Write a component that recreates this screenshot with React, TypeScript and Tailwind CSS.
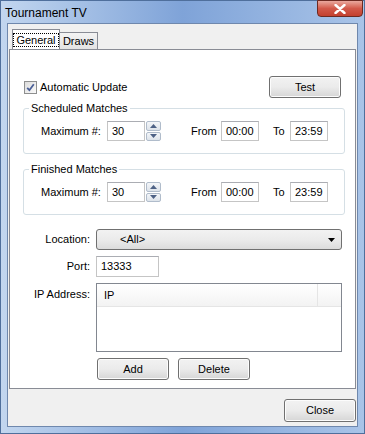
import React from "react";

const font = { fontFamily: '"Liberation Sans", Arial, sans-serif' };

function Btn({ label, className = "" }: { label: string; className?: string }) {
  return (
    <div
      className={
        "flex items-center justify-center w-[72px] h-[22px] rounded-[3px] border border-[#707070] bg-gradient-to-b from-[#f2f2f2] via-[#ebebeb] to-[#d6d6d6] text-[11px] text-black shadow-[inset_0_0_0_1px_#fcfcfc] " +
        className
      }
    >
      {label}
    </div>
  );
}

function TextBox({ value, className = "" }: { value: string; className?: string }) {
  return (
    <div
      className={
        "h-[20px] border border-[#c5c5c5] border-t-[#abadb3] bg-white px-[4px] flex items-center text-[11px] " +
        className
      }
    >
      {value}
    </div>
  );
}

function Spinner() {
  return (
    <div className="flex flex-col ml-[1px] w-[15px] h-[20px] gap-[1px]">
      <div className="flex-1 flex items-center justify-center border border-[#b0bccb] rounded-[2px] bg-gradient-to-b from-[#f4f6f9] to-[#dde3ea]">
        <svg width="7" height="4" viewBox="0 0 7 4">
          <path d="M0 4 L3.5 0 L7 4 Z" fill="#4d6185" />
        </svg>
      </div>
      <div className="flex-1 flex items-center justify-center border border-[#b0bccb] rounded-[2px] bg-gradient-to-b from-[#f4f6f9] to-[#dde3ea]">
        <svg width="7" height="4" viewBox="0 0 7 4">
          <path d="M0 0 L7 0 L3.5 4 Z" fill="#4d6185" />
        </svg>
      </div>
    </div>
  );
}

function Group({ title }: { title: string }) {
  return (
    <div className="relative h-[46px] border border-[#d5dfe5] rounded-[3px] pt-[12px] pl-[17px]">
      <span className="absolute -top-[8px] left-[5px] bg-white px-[2px] text-[11px] leading-[14px]">{title}</span>
      <div className="flex items-center text-[11px]">
        <span className="w-[66px]">Maximum #:</span>
        <TextBox value="30" className="w-[38px]" />
        <Spinner />
        <span className="ml-[30px] w-[30px]">From</span>
        <TextBox value="00:00" className="w-[38px]" />
        <span className="ml-[14px] w-[17px]">To</span>
        <TextBox value="23:59" className="w-[38px]" />
      </div>
    </div>
  );
}

export default function App() {
  return (
    <div
      style={font}
      className="w-[365px] h-[434px] flex flex-col bg-gradient-to-r from-[#c2d6ef] via-[#7fa3d8] to-[#a9c4e8] border border-[#4f6f9c] px-[6px] pb-[6px] text-black"
    >
      {/* title bar */}
      <div className="h-[22px] flex items-start justify-between">
        <span className="mt-[3px] ml-[-2px] text-[12px]">Tournament TV</span>
        <div className="w-[46px] h-[17px] mt-[-1px] mr-[-5px] rounded-b-[4px] border border-[#6d2a22] bg-gradient-to-b from-[#e9a89e] via-[#d2594a] to-[#c3402f] flex items-center justify-center">
          <svg width="12" height="10" viewBox="0 0 12 10">
            <path d="M1.5 1 L10.5 9 M10.5 1 L1.5 9" stroke="#fff" strokeWidth="2.4" strokeLinecap="round" />
          </svg>
        </div>
      </div>

      {/* client area */}
      <div className="flex-1 flex flex-col bg-[#f0f0f0] border border-[#6f88ad] pl-[1px]">
        {/* tabs */}
        <div className="flex items-end mt-[6px] ml-[3px] h-[19px] text-[11px] relative z-10">
          <div className="h-[20px] w-[48px] bg-white border border-[#898c95] border-b-0 flex items-center justify-center">
            <span className="border border-dotted border-black px-[2px] leading-[12px]">General</span>
          </div>
          <div className="h-[17px] w-[38px] bg-gradient-to-b from-[#f3f3f3] to-[#e3e3e3] border border-[#898c95] border-l-0 border-b-0 flex items-center justify-center">
            Draws
          </div>
        </div>

        {/* panel */}
        <div className="w-[347px] h-[340px] bg-white border border-[#898c95] pt-[26px] pl-[13px] pr-[10px] text-[11px]">
          <div className="h-[22px] flex items-center justify-between">
            <div className="flex items-center ml-[1px]">
              <div className="w-[13px] h-[13px] border border-[#8e8f8f] bg-gradient-to-br from-[#dcdcdc] to-[#fafafa] flex items-center justify-center">
                <svg width="9" height="9" viewBox="0 0 9 9">
                  <path d="M1.2 4.8 L3.4 7.2 L7.8 1.2" stroke="#4a5f97" strokeWidth="1.8" fill="none" />
                </svg>
              </div>
              <span className="ml-[3px]">Automatic Update</span>
            </div>
            <Btn label="Test" className="mr-[4px]" />
          </div>

          <div className="mt-[10px]">
            <Group title="Scheduled Matches" />
          </div>
          <div className="mt-[15px]">
            <Group title="Finished Matches" />
          </div>

          <div className="mt-[14px] flex items-center">
            <span className="w-[67px] text-right">Location:</span>
            <div className="ml-[6px] w-[246px] h-[21px] rounded-[3px] border border-[#707070] bg-gradient-to-b from-[#f2f2f2] via-[#ebebeb] to-[#dcdcdc] flex items-center justify-between pl-[23px] pr-[6px]">
              <span>&lt;All&gt;</span>
              <svg width="7" height="4" viewBox="0 0 7 4">
                <path d="M0 0 L7 0 L3.5 4 Z" fill="#000" />
              </svg>
            </div>
          </div>

          <div className="mt-[6px] flex items-center">
            <span className="w-[67px] text-right">Port:</span>
            <TextBox value="13333" className="ml-[6px] w-[63px] h-[21px]" />
          </div>

          <div className="mt-[6px] flex items-start">
            <span className="w-[67px] text-right mt-[3px]">IP Address:</span>
            <div className="ml-[6px] w-[246px] h-[69px] border border-[#828790] bg-white flex flex-col">
              <div className="h-[23px] flex border-b border-[#e5e5e5] bg-gradient-to-b from-[#ffffff] to-[#f3f3f3]">
                <div className="w-[221px] border-r border-[#e5e5e5] flex items-center pl-[7px]">IP</div>
                <div className="flex-1" />
              </div>
            </div>
          </div>

          <div className="mt-[6px] flex ml-[74px] gap-[9px]">
            <Btn label="Add" />
            <Btn label="Delete" />
          </div>
        </div>

        <div className="flex justify-end mt-[10px] mr-[1px]">
          <Btn label="Close" className="h-[23px]" />
        </div>
      </div>
    </div>
  );
}
